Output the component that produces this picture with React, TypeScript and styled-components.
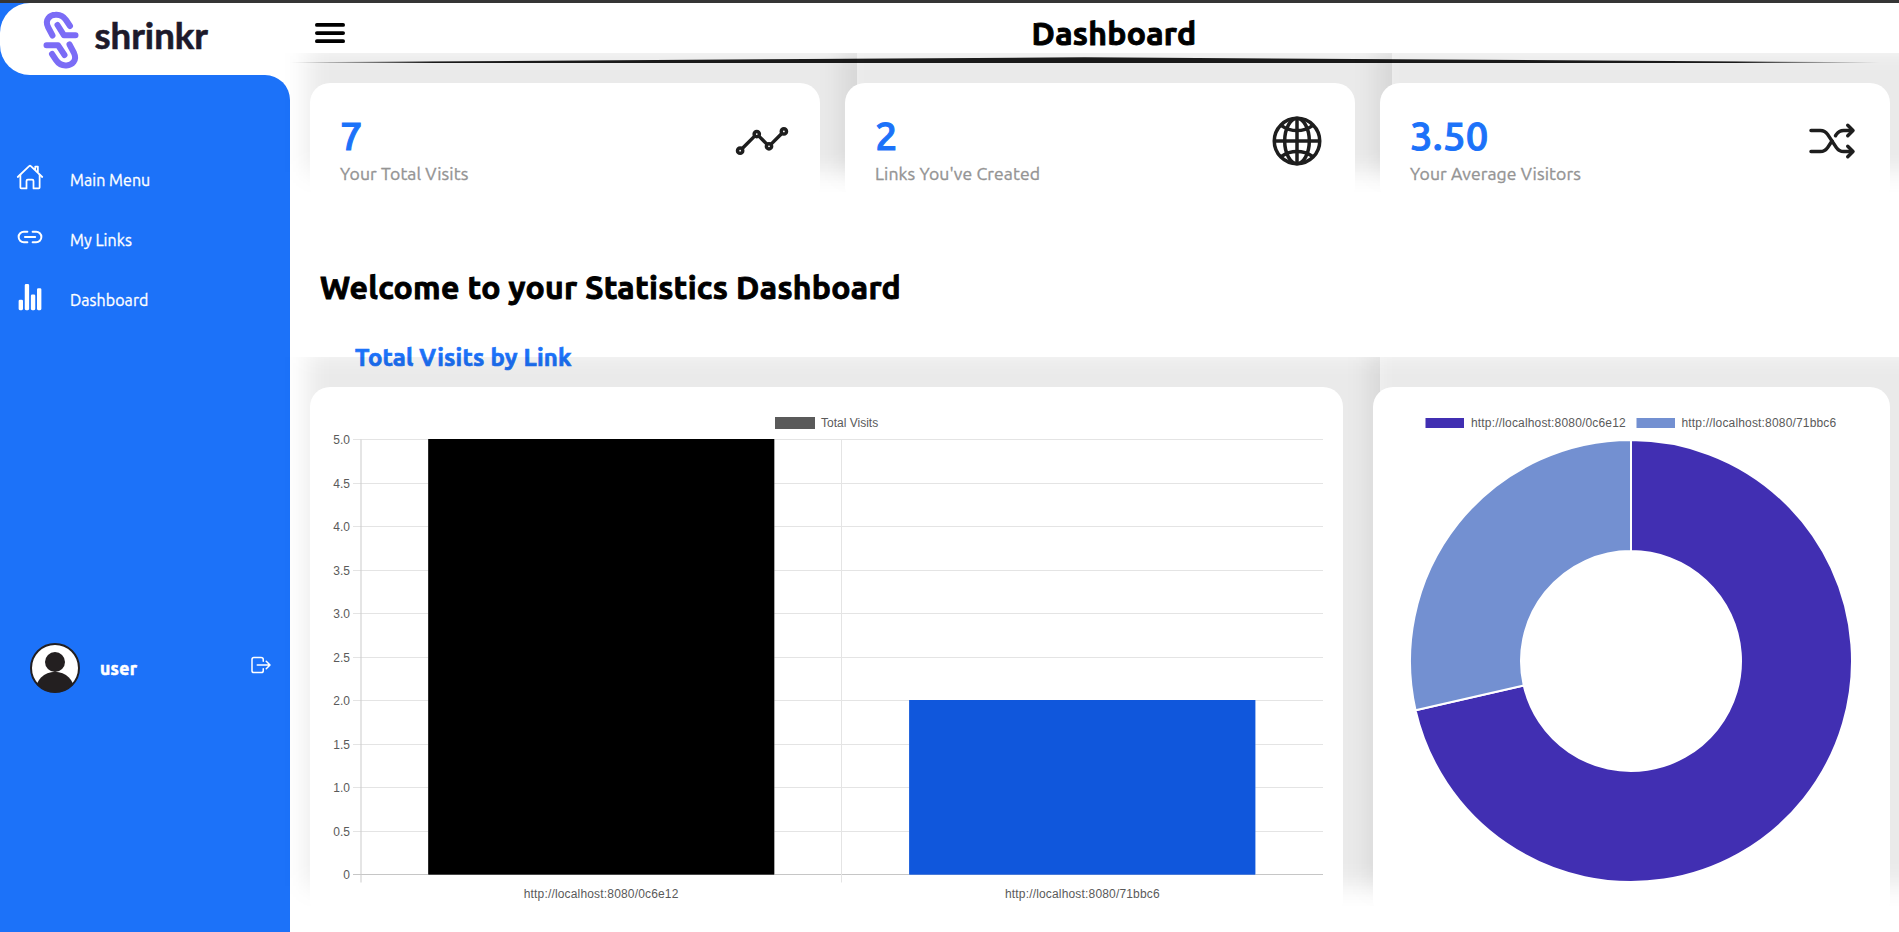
import React from 'react';
import styled, { createGlobalStyle } from 'styled-components';
import {
  IoAnalyticsOutline,
  IoGlobeOutline,
  IoHomeOutline,
  IoLinkOutline,
  IoLogOutOutline,
  IoMenu,
  IoShuffle,
  IoStatsChart,
} from 'react-icons/io5';
import type { IconType } from 'react-icons';

const BLUE = '#1c72f9';
const INK = '#1e1e1e';

const GlobalStyle = createGlobalStyle`
  * { box-sizing: border-box; margin: 0; padding: 0; }
  html, body { background: #fff; overflow: hidden; }
  body { font-family: Ubuntu, 'Noto Sans', sans-serif; color: #000; }
`;

const Page = styled.div`
  display: flex;
  width: 100vw;
  height: 100vh;
  border-top: 3px solid #353535;
  background: #fff;
  overflow: hidden;
`;

/* Sidebar */
const Sidebar = styled.aside`
  display: flex;
  flex-direction: column;
  flex: 0 0 290px;
  background: linear-gradient(${BLUE} 0 0) left top / 40px 76px no-repeat;
`;

const Brand = styled.div`
  flex: 0 0 72px;
  padding-left: 36px;
  background: #fff;
  border-radius: 30px 0 0 30px;

  svg { display: block; }
`;

const Nav = styled.nav`
  display: flex;
  flex: 1;
  flex-direction: column;
  padding-top: 73px;
  background: ${BLUE};
  border-top-right-radius: 25px;
  color: #fff;
`;

const NavItem = styled.a`
  display: flex;
  height: 60px;
  padding-left: 16px;
  font-size: 16px;
  line-height: 60px;
  letter-spacing: 0.05px;
  -webkit-text-stroke: 0.3px;

  svg { width: 28px; height: 28px; margin: 15px 26px 0 0; -webkit-text-stroke: 0; }
  span { padding-top: 2px; }
`;

const UserRow = styled.div`
  display: flex;
  align-items: center;
  height: 50px;
  margin-top: 315px;
  padding: 0 17px 0 30px;
`;

const UserName = styled.strong`
  flex: 1;
  margin-left: 20px;
  font-size: 17.6px;
  letter-spacing: 0.3px;
  -webkit-text-stroke: 0.6px;
`;

const LogoutIcon = styled(IoLogOutOutline)`
  width: 24px;
  height: 24px;
  margin-bottom: 7px;
`;

/* Main column */
const Main = styled.main`
  flex: 1;
  min-width: 0;
`;

const Topbar = styled.header`
  display: flex;
  align-items: center;
  height: 54px;
  padding: 0 20px;

  svg { width: 40px; height: 40px; margin-top: 6px; }
`;

const PageTitle = styled.h1`
  flex: 1;
  padding: 0 40px 0 39px;
  font-size: 32px;
  line-height: 36px;
  text-align: center;
  margin-top: 6px;
  letter-spacing: 0.28px;
  -webkit-text-stroke: 0.9px;
`;

const TaperedRule = styled.div`
  width: 1589px;
  height: 6px;
  background: linear-gradient(90deg, transparent, ${INK} 9%, ${INK} 91%, transparent);
  clip-path: polygon(0 88%, 50% 5%, 100% 88%, 100% 100%, 0 100%);
`;

const StatRow = styled.section`
  display: grid;
  grid-template-columns: repeat(3, 510px);
  gap: 25px;
  padding: 20px 0 0 20px;
`;

const Card = styled.article`
  position: relative;
  isolation: isolate;
`;

const CardFace = styled.div<{ $height: number }>`
  height: ${(p) => p.$height}px;
  background: #fff;
  border-radius: 20px;
`;

/* Soft shadow that is cut off above and to the right of its card */
const CardShadow = styled.div`
  position: absolute;
  z-index: -1;
  inset: -30px -37px 14px -40px;
  overflow: hidden;

  &::before {
    content: '';
    position: absolute;
    inset: -5px -70px 20px 37px;
    background: rgba(0, 0, 0, 0.083);
    filter: blur(12px);
  }
`;

const StatFace = styled(CardFace)`
  display: flex;
  justify-content: space-between;
  padding: 30px 30px 0;

  svg { width: 56px; height: 56px; color: ${INK}; }
`;

const StatNumber = styled.div`
  font-size: 40px;
  font-weight: 500;
  line-height: 46px;
  letter-spacing: 0.3px;
  color: ${BLUE};
  -webkit-text-stroke: 1.1px;
`;

const StatLabel = styled.div`
  font-size: 17.6px;
  line-height: 20px;
  margin-top: 5px;
  letter-spacing: 0.1px;
  color: #949494;
  -webkit-text-stroke: 0.35px;
`;

const Welcome = styled.h2`
  margin: 62px 0 0 30px;
  font-size: 32px;
  line-height: 38px;
  letter-spacing: 0.28px;
  -webkit-text-stroke: 0.9px;
`;

const SectionTitle = styled.h3`
  margin: 38px 0 0 65px;
  font-size: 24px;
  line-height: 28px;
  letter-spacing: 0.2px;
  color: ${BLUE};
  -webkit-text-stroke: 0.7px;
`;

const ChartRow = styled.section`
  display: grid;
  grid-template-columns: 1033px 517px;
  gap: 30px;
  padding: 15px 0 0 20px;
`;

const Chart = styled.svg`
  display: block;
  width: 100%;
  height: 100%;
  font: 12px 'Liberation Sans', Arial, sans-serif;
  fill: #5a5a5a;
`;

const UrlText = styled.text`
  letter-spacing: 0.17px;
`;

function Logo() {
  return (
    <svg width="190" height="72" viewBox="0 0 190 72">
      <g
        fill="none"
        stroke="#7b6cf6"
        strokeWidth="6"
        strokeLinecap="round"
        strokeLinejoin="round"
      >
        <path d="M16.5 32.5 L12 24 C8.500 16.500 14 12 19.500 11.800 C24.500 11.400 28 14 30 17 L34 23" />
        <path d="M21.500 22 L28 32.300 H39.500" />
        <path d="M33.500 41.500 L38 50 C41.500 57.500 36 62.200 30.500 62.400 C25.500 62.800 22 60 20 57 L16 51" />
        <path d="M28.500 52 L22 42.200 H10.500" />
      </g>
      <text
        x="58.500"
        y="45.500"
        fill="#1d1a2b"
        stroke="#1d1a2b"
        strokeWidth="0.600"
        fontFamily="Lato, sans-serif"
        fontWeight="700"
        fontSize="37"
        textLength="113.500"
        lengthAdjust="spacingAndGlyphs"
      >
        shrinkr
      </text>
    </svg>
  );
}

function Avatar() {
  return (
    <svg width="50" height="50" viewBox="0 0 50 50">
      <defs>
        <clipPath id="avatar-clip">
          <circle cx="25" cy="25" r="24.500" />
        </clipPath>
      </defs>
      <circle cx="25" cy="25" r="24" fill="#fff" />
      <g clipPath="url(#avatar-clip)" fill="#231f20">
        <circle cx="25" cy="19" r="10" />
        <circle cx="25" cy="48.500" r="19.700" />
      </g>
      <circle cx="25" cy="25" r="24" fill="none" stroke="#231f20" strokeWidth="2" />
    </svg>
  );
}

const navItems: { label: string; icon: IconType }[] = [
  { label: 'Main Menu', icon: IoHomeOutline },
  { label: 'My Links', icon: IoLinkOutline },
  { label: 'Dashboard', icon: IoStatsChart },
];

const stats: { value: string; label: string; icon: IconType }[] = [
  { value: '7', label: 'Your Total Visits', icon: IoAnalyticsOutline },
  { value: '2', label: "Links You've Created", icon: IoGlobeOutline },
  { value: '3.50', label: 'Your Average Visitors', icon: IoShuffle },
];

const links = [
  { url: 'http://localhost:8080/0c6e12', visits: 5, bar: '#000', edge: '#555', slice: '#412fb2' },
  { url: 'http://localhost:8080/71bbc6', visits: 2, bar: '#1057dc', edge: '#3f78e0', slice: '#7390d1' },
];

function BarChart() {
  const left = 50.5;
  const right = 1013;
  const top = 52.5;
  const bottom = 487.5;
  const band = (right - left) / 2;
  const ticks = Array.from({ length: 11 }, (_, i) => i / 2);
  const yOf = (v: number) => Math.floor(bottom - ((bottom - top) * v) / 5) + 0.5;

  return (
    <Chart viewBox="0 0 1033 533">
      <rect x="465" y="30" width="40" height="12" fill="#5a5a5a" />
      <text x="511" y="40">Total Visits</text>
      {ticks.map((v) => (
        <g key={v}>
          <path d={`M43 ${yOf(v)}H${right}`} stroke={v === 0 ? '#c6c6c6' : '#e4e4e4'} />
          <text x="40" y={yOf(v) + 4} textAnchor="end">
            {v === 0 ? '0' : v.toFixed(1)}
          </text>
        </g>
      ))}
      <path d={`M${left + 0.5} ${top}V${bottom + 8}`} stroke="#cbcbcb" />
      <path d={`M${left + band - 0.25} ${top}V${bottom + 8}`} stroke="#e4e4e4" />
      {links.map((l, i) => {
        const x = Math.round(left + band * i + 67.5);
        const y = yOf(l.visits) - 0.5;
        return (
          <g key={l.url}>
            <rect x={x} y={y} width="346.500" height={bottom - y} fill={l.edge} />
            <rect x={x + 0.5} y={y} width="345.500" height={bottom - y} fill={l.bar} />
            <UrlText x={left + band * (i + 0.5)} y="510.500" textAnchor="middle">
              {l.url}
            </UrlText>
          </g>
        );
      })}
    </Chart>
  );
}

function DoughnutChart() {
  const cx = 258;
  const cy = 274;
  const outer = 221;
  const inner = 110;
  const total = links.reduce((sum, l) => sum + l.visits, 0);
  const point = (r: number, turn: number) => {
    const a = turn * Math.PI * 2 - Math.PI / 2;
    return `${(cx + r * Math.cos(a)).toFixed(2)} ${(cy + r * Math.sin(a)).toFixed(2)}`;
  };
  let start = 0;

  return (
    <Chart viewBox="0 0 517 533">
      {links.map((l, i) => (
        <g key={l.url}>
          <rect x={52.5 + i * 211} y="31" width="38.500" height="10" fill={l.slice} />
          <UrlText x={98 + i * 210.5} y="40">{l.url}</UrlText>
        </g>
      ))}
      {links.map((l) => {
        const from = start;
        const to = start + l.visits / total;
        const large = to - from > 0.5 ? 1 : 0;
        start = to;
        return (
          <path
            key={l.url}
            fill={l.slice}
            stroke="#fff"
            strokeWidth="2"
            d={`M${point(outer, from)}A${outer} ${outer} 0 ${large} 1 ${point(outer, to)}L${point(inner, to)}A${inner} ${inner} 0 ${large} 0 ${point(inner, from)}Z`}
          />
        );
      })}
    </Chart>
  );
}

export default function App() {
  return (
    <Page>
      <GlobalStyle />
      <Sidebar>
        <Brand>
          <Logo />
        </Brand>
        <Nav>
          {navItems.map(({ label, icon: Icon }) => (
            <NavItem key={label}>
              <Icon />
              <span>{label}</span>
            </NavItem>
          ))}
          <UserRow>
            <Avatar />
            <UserName>user</UserName>
            <LogoutIcon />
          </UserRow>
        </Nav>
      </Sidebar>
      <Main>
        <Topbar>
          <IoMenu />
          <PageTitle>Dashboard</PageTitle>
        </Topbar>
        <TaperedRule />
        <StatRow>
          {stats.map(({ value, label, icon: Icon }) => (
            <Card key={label}>
              <CardShadow />
              <StatFace $height={123}>
                <div>
                  <StatNumber>{value}</StatNumber>
                  <StatLabel>{label}</StatLabel>
                </div>
                <Icon />
              </StatFace>
            </Card>
          ))}
        </StatRow>
        <Welcome>Welcome to your Statistics Dashboard</Welcome>
        <SectionTitle>Total Visits by Link</SectionTitle>
        <ChartRow>
          <Card>
            <CardShadow />
            <CardFace $height={533}>
              <BarChart />
            </CardFace>
          </Card>
          <Card>
            <CardShadow />
            <CardFace $height={533}>
              <DoughnutChart />
            </CardFace>
          </Card>
        </ChartRow>
      </Main>
    </Page>
  );
}
